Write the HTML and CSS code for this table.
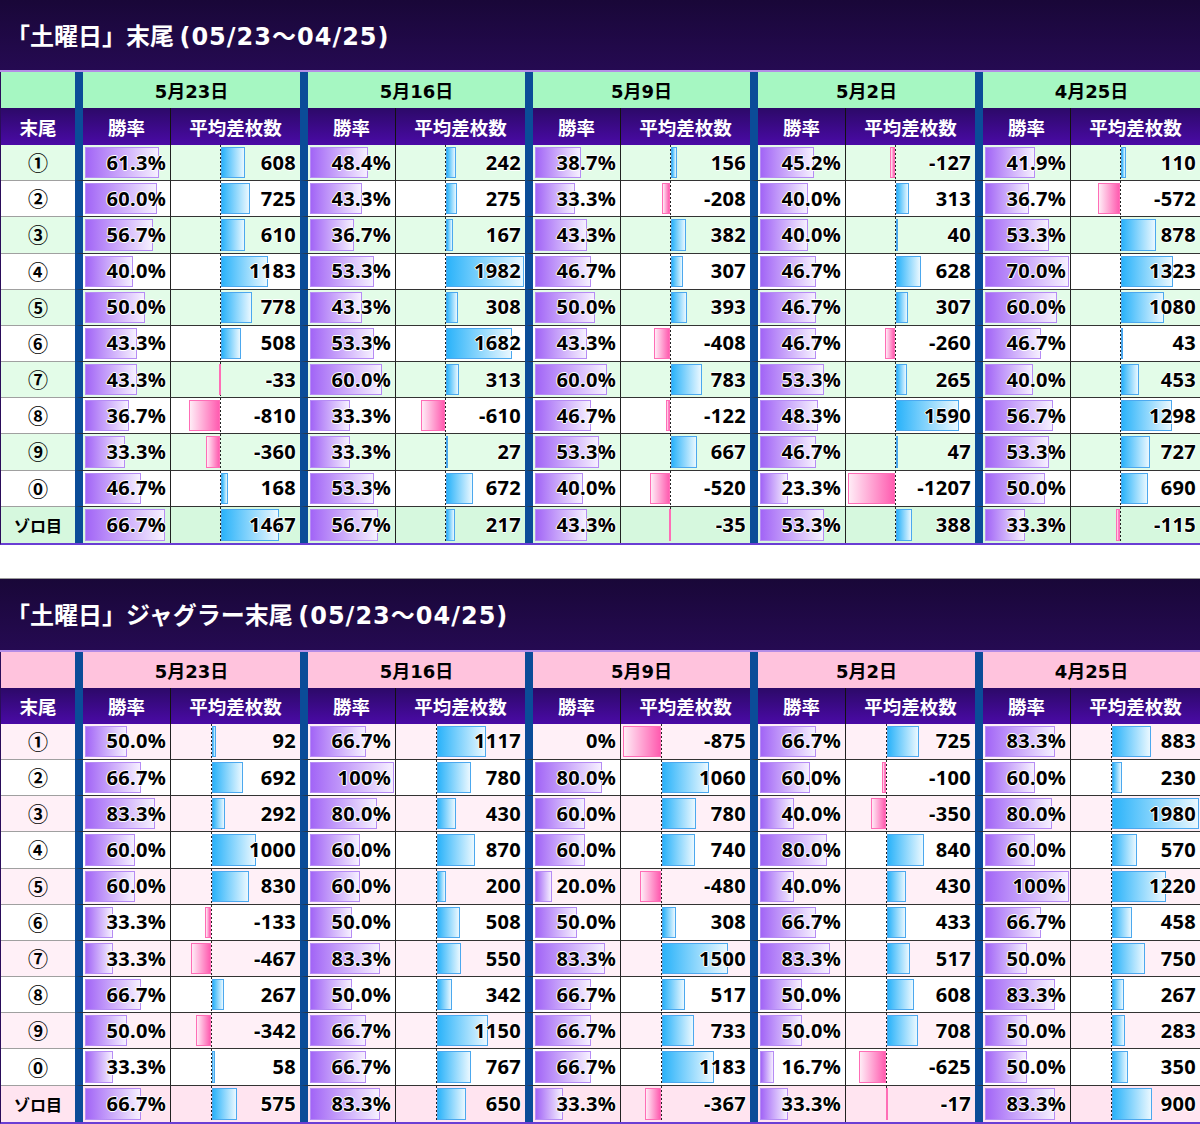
FILE: index.html
```html
<!DOCTYPE html>
<html lang="ja">
<head>
<meta charset="utf-8">
<title>土曜日 末尾</title>
<link rel="stylesheet" href="styles.css">
</head>
<body>
<div class="sheet">

<section class="block t1">
<div class="title"><span class="tj">「土曜日」末尾 </span><span class="rng">(05/23～04/25)</span></div>
<div class="table">
<div class="row h1">
<div class="c k"></div>
<div class="c date">5月23日</div>
<div class="c date">5月16日</div>
<div class="c date">5月9日</div>
<div class="c date">5月2日</div>
<div class="c date">4月25日</div>
</div>
<div class="row h2">
<div class="c k">末尾</div>
<div class="c wr">勝率</div><div class="c df">平均差枚数</div>
<div class="c wr">勝率</div><div class="c df">平均差枚数</div>
<div class="c wr">勝率</div><div class="c df">平均差枚数</div>
<div class="c wr">勝率</div><div class="c df">平均差枚数</div>
<div class="c wr">勝率</div><div class="c df">平均差枚数</div>
</div>

<div class="row d odd">
<div class="c k">①</div>
<div class="c wr"><i class="wb" style="--p:61.3"></i><span class="n">61.3%</span></div>
<div class="c df"><i class="db pos" style="--v:608"></i><span class="n">608</span></div>
<div class="c wr"><i class="wb" style="--p:48.4"></i><span class="n">48.4%</span></div>
<div class="c df"><i class="db pos" style="--v:242"></i><span class="n">242</span></div>
<div class="c wr"><i class="wb" style="--p:38.7"></i><span class="n">38.7%</span></div>
<div class="c df"><i class="db pos" style="--v:156"></i><span class="n">156</span></div>
<div class="c wr"><i class="wb" style="--p:45.2"></i><span class="n">45.2%</span></div>
<div class="c df"><i class="db neg" style="--v:127"></i><span class="n">-127</span></div>
<div class="c wr"><i class="wb" style="--p:41.9"></i><span class="n">41.9%</span></div>
<div class="c df"><i class="db pos" style="--v:110"></i><span class="n">110</span></div>
</div>

<div class="row d">
<div class="c k">②</div>
<div class="c wr"><i class="wb" style="--p:60"></i><span class="n">60.0%</span></div>
<div class="c df"><i class="db pos" style="--v:725"></i><span class="n">725</span></div>
<div class="c wr"><i class="wb" style="--p:43.3"></i><span class="n">43.3%</span></div>
<div class="c df"><i class="db pos" style="--v:275"></i><span class="n">275</span></div>
<div class="c wr"><i class="wb" style="--p:33.3"></i><span class="n">33.3%</span></div>
<div class="c df"><i class="db neg" style="--v:208"></i><span class="n">-208</span></div>
<div class="c wr"><i class="wb" style="--p:40"></i><span class="n">40.0%</span></div>
<div class="c df"><i class="db pos" style="--v:313"></i><span class="n">313</span></div>
<div class="c wr"><i class="wb" style="--p:36.7"></i><span class="n">36.7%</span></div>
<div class="c df"><i class="db neg" style="--v:572"></i><span class="n">-572</span></div>
</div>

<div class="row d odd">
<div class="c k">③</div>
<div class="c wr"><i class="wb" style="--p:56.7"></i><span class="n">56.7%</span></div>
<div class="c df"><i class="db pos" style="--v:610"></i><span class="n">610</span></div>
<div class="c wr"><i class="wb" style="--p:36.7"></i><span class="n">36.7%</span></div>
<div class="c df"><i class="db pos" style="--v:167"></i><span class="n">167</span></div>
<div class="c wr"><i class="wb" style="--p:43.3"></i><span class="n">43.3%</span></div>
<div class="c df"><i class="db pos" style="--v:382"></i><span class="n">382</span></div>
<div class="c wr"><i class="wb" style="--p:40"></i><span class="n">40.0%</span></div>
<div class="c df"><i class="db pos" style="--v:40"></i><span class="n">40</span></div>
<div class="c wr"><i class="wb" style="--p:53.3"></i><span class="n">53.3%</span></div>
<div class="c df"><i class="db pos" style="--v:878"></i><span class="n">878</span></div>
</div>

<div class="row d">
<div class="c k">④</div>
<div class="c wr"><i class="wb" style="--p:40"></i><span class="n">40.0%</span></div>
<div class="c df"><i class="db pos" style="--v:1183"></i><span class="n">1183</span></div>
<div class="c wr"><i class="wb" style="--p:53.3"></i><span class="n">53.3%</span></div>
<div class="c df"><i class="db pos" style="--v:1982"></i><span class="n">1982</span></div>
<div class="c wr"><i class="wb" style="--p:46.7"></i><span class="n">46.7%</span></div>
<div class="c df"><i class="db pos" style="--v:307"></i><span class="n">307</span></div>
<div class="c wr"><i class="wb" style="--p:46.7"></i><span class="n">46.7%</span></div>
<div class="c df"><i class="db pos" style="--v:628"></i><span class="n">628</span></div>
<div class="c wr"><i class="wb" style="--p:70"></i><span class="n">70.0%</span></div>
<div class="c df"><i class="db pos" style="--v:1323"></i><span class="n">1323</span></div>
</div>

<div class="row d odd">
<div class="c k">⑤</div>
<div class="c wr"><i class="wb" style="--p:50"></i><span class="n">50.0%</span></div>
<div class="c df"><i class="db pos" style="--v:778"></i><span class="n">778</span></div>
<div class="c wr"><i class="wb" style="--p:43.3"></i><span class="n">43.3%</span></div>
<div class="c df"><i class="db pos" style="--v:308"></i><span class="n">308</span></div>
<div class="c wr"><i class="wb" style="--p:50"></i><span class="n">50.0%</span></div>
<div class="c df"><i class="db pos" style="--v:393"></i><span class="n">393</span></div>
<div class="c wr"><i class="wb" style="--p:46.7"></i><span class="n">46.7%</span></div>
<div class="c df"><i class="db pos" style="--v:307"></i><span class="n">307</span></div>
<div class="c wr"><i class="wb" style="--p:60"></i><span class="n">60.0%</span></div>
<div class="c df"><i class="db pos" style="--v:1080"></i><span class="n">1080</span></div>
</div>

<div class="row d">
<div class="c k">⑥</div>
<div class="c wr"><i class="wb" style="--p:43.3"></i><span class="n">43.3%</span></div>
<div class="c df"><i class="db pos" style="--v:508"></i><span class="n">508</span></div>
<div class="c wr"><i class="wb" style="--p:53.3"></i><span class="n">53.3%</span></div>
<div class="c df"><i class="db pos" style="--v:1682"></i><span class="n">1682</span></div>
<div class="c wr"><i class="wb" style="--p:43.3"></i><span class="n">43.3%</span></div>
<div class="c df"><i class="db neg" style="--v:408"></i><span class="n">-408</span></div>
<div class="c wr"><i class="wb" style="--p:46.7"></i><span class="n">46.7%</span></div>
<div class="c df"><i class="db neg" style="--v:260"></i><span class="n">-260</span></div>
<div class="c wr"><i class="wb" style="--p:46.7"></i><span class="n">46.7%</span></div>
<div class="c df"><i class="db pos" style="--v:43"></i><span class="n">43</span></div>
</div>

<div class="row d odd">
<div class="c k">⑦</div>
<div class="c wr"><i class="wb" style="--p:43.3"></i><span class="n">43.3%</span></div>
<div class="c df"><i class="db neg" style="--v:33"></i><span class="n">-33</span></div>
<div class="c wr"><i class="wb" style="--p:60"></i><span class="n">60.0%</span></div>
<div class="c df"><i class="db pos" style="--v:313"></i><span class="n">313</span></div>
<div class="c wr"><i class="wb" style="--p:60"></i><span class="n">60.0%</span></div>
<div class="c df"><i class="db pos" style="--v:783"></i><span class="n">783</span></div>
<div class="c wr"><i class="wb" style="--p:53.3"></i><span class="n">53.3%</span></div>
<div class="c df"><i class="db pos" style="--v:265"></i><span class="n">265</span></div>
<div class="c wr"><i class="wb" style="--p:40"></i><span class="n">40.0%</span></div>
<div class="c df"><i class="db pos" style="--v:453"></i><span class="n">453</span></div>
</div>

<div class="row d">
<div class="c k">⑧</div>
<div class="c wr"><i class="wb" style="--p:36.7"></i><span class="n">36.7%</span></div>
<div class="c df"><i class="db neg" style="--v:810"></i><span class="n">-810</span></div>
<div class="c wr"><i class="wb" style="--p:33.3"></i><span class="n">33.3%</span></div>
<div class="c df"><i class="db neg" style="--v:610"></i><span class="n">-610</span></div>
<div class="c wr"><i class="wb" style="--p:46.7"></i><span class="n">46.7%</span></div>
<div class="c df"><i class="db neg" style="--v:122"></i><span class="n">-122</span></div>
<div class="c wr"><i class="wb" style="--p:48.3"></i><span class="n">48.3%</span></div>
<div class="c df"><i class="db pos" style="--v:1590"></i><span class="n">1590</span></div>
<div class="c wr"><i class="wb" style="--p:56.7"></i><span class="n">56.7%</span></div>
<div class="c df"><i class="db pos" style="--v:1298"></i><span class="n">1298</span></div>
</div>

<div class="row d odd">
<div class="c k">⑨</div>
<div class="c wr"><i class="wb" style="--p:33.3"></i><span class="n">33.3%</span></div>
<div class="c df"><i class="db neg" style="--v:360"></i><span class="n">-360</span></div>
<div class="c wr"><i class="wb" style="--p:33.3"></i><span class="n">33.3%</span></div>
<div class="c df"><i class="db pos" style="--v:27"></i><span class="n">27</span></div>
<div class="c wr"><i class="wb" style="--p:53.3"></i><span class="n">53.3%</span></div>
<div class="c df"><i class="db pos" style="--v:667"></i><span class="n">667</span></div>
<div class="c wr"><i class="wb" style="--p:46.7"></i><span class="n">46.7%</span></div>
<div class="c df"><i class="db pos" style="--v:47"></i><span class="n">47</span></div>
<div class="c wr"><i class="wb" style="--p:53.3"></i><span class="n">53.3%</span></div>
<div class="c df"><i class="db pos" style="--v:727"></i><span class="n">727</span></div>
</div>

<div class="row d">
<div class="c k">⓪</div>
<div class="c wr"><i class="wb" style="--p:46.7"></i><span class="n">46.7%</span></div>
<div class="c df"><i class="db pos" style="--v:168"></i><span class="n">168</span></div>
<div class="c wr"><i class="wb" style="--p:53.3"></i><span class="n">53.3%</span></div>
<div class="c df"><i class="db pos" style="--v:672"></i><span class="n">672</span></div>
<div class="c wr"><i class="wb" style="--p:40"></i><span class="n">40.0%</span></div>
<div class="c df"><i class="db neg" style="--v:520"></i><span class="n">-520</span></div>
<div class="c wr"><i class="wb" style="--p:23.3"></i><span class="n">23.3%</span></div>
<div class="c df"><i class="db neg" style="--v:1207"></i><span class="n">-1207</span></div>
<div class="c wr"><i class="wb" style="--p:50"></i><span class="n">50.0%</span></div>
<div class="c df"><i class="db pos" style="--v:690"></i><span class="n">690</span></div>
</div>

<div class="row d zoro">
<div class="c k small">ゾロ目</div>
<div class="c wr"><i class="wb" style="--p:66.7"></i><span class="n">66.7%</span></div>
<div class="c df"><i class="db pos" style="--v:1467"></i><span class="n">1467</span></div>
<div class="c wr"><i class="wb" style="--p:56.7"></i><span class="n">56.7%</span></div>
<div class="c df"><i class="db pos" style="--v:217"></i><span class="n">217</span></div>
<div class="c wr"><i class="wb" style="--p:43.3"></i><span class="n">43.3%</span></div>
<div class="c df"><i class="db neg" style="--v:35"></i><span class="n">-35</span></div>
<div class="c wr"><i class="wb" style="--p:53.3"></i><span class="n">53.3%</span></div>
<div class="c df"><i class="db pos" style="--v:388"></i><span class="n">388</span></div>
<div class="c wr"><i class="wb" style="--p:33.3"></i><span class="n">33.3%</span></div>
<div class="c df"><i class="db neg" style="--v:115"></i><span class="n">-115</span></div>
</div>
</div>
</section>

<section class="block t2">
<div class="title"><span class="tj">「土曜日」ジャグラー末尾 </span><span class="rng">(05/23～04/25)</span></div>
<div class="table">
<div class="row h1">
<div class="c k"></div>
<div class="c date">5月23日</div>
<div class="c date">5月16日</div>
<div class="c date">5月9日</div>
<div class="c date">5月2日</div>
<div class="c date">4月25日</div>
</div>
<div class="row h2">
<div class="c k">末尾</div>
<div class="c wr">勝率</div><div class="c df">平均差枚数</div>
<div class="c wr">勝率</div><div class="c df">平均差枚数</div>
<div class="c wr">勝率</div><div class="c df">平均差枚数</div>
<div class="c wr">勝率</div><div class="c df">平均差枚数</div>
<div class="c wr">勝率</div><div class="c df">平均差枚数</div>
</div>

<div class="row d odd">
<div class="c k">①</div>
<div class="c wr"><i class="wb" style="--p:50"></i><span class="n">50.0%</span></div>
<div class="c df"><i class="db pos" style="--v:92"></i><span class="n">92</span></div>
<div class="c wr"><i class="wb" style="--p:66.7"></i><span class="n">66.7%</span></div>
<div class="c df"><i class="db pos" style="--v:1117"></i><span class="n">1117</span></div>
<div class="c wr"><span class="n">0%</span></div>
<div class="c df"><i class="db neg" style="--v:875"></i><span class="n">-875</span></div>
<div class="c wr"><i class="wb" style="--p:66.7"></i><span class="n">66.7%</span></div>
<div class="c df"><i class="db pos" style="--v:725"></i><span class="n">725</span></div>
<div class="c wr"><i class="wb" style="--p:83.3"></i><span class="n">83.3%</span></div>
<div class="c df"><i class="db pos" style="--v:883"></i><span class="n">883</span></div>
</div>

<div class="row d">
<div class="c k">②</div>
<div class="c wr"><i class="wb" style="--p:66.7"></i><span class="n">66.7%</span></div>
<div class="c df"><i class="db pos" style="--v:692"></i><span class="n">692</span></div>
<div class="c wr"><i class="wb" style="--p:100"></i><span class="n">100%</span></div>
<div class="c df"><i class="db pos" style="--v:780"></i><span class="n">780</span></div>
<div class="c wr"><i class="wb" style="--p:80"></i><span class="n">80.0%</span></div>
<div class="c df"><i class="db pos" style="--v:1060"></i><span class="n">1060</span></div>
<div class="c wr"><i class="wb" style="--p:60"></i><span class="n">60.0%</span></div>
<div class="c df"><i class="db neg" style="--v:100"></i><span class="n">-100</span></div>
<div class="c wr"><i class="wb" style="--p:60"></i><span class="n">60.0%</span></div>
<div class="c df"><i class="db pos" style="--v:230"></i><span class="n">230</span></div>
</div>

<div class="row d odd">
<div class="c k">③</div>
<div class="c wr"><i class="wb" style="--p:83.3"></i><span class="n">83.3%</span></div>
<div class="c df"><i class="db pos" style="--v:292"></i><span class="n">292</span></div>
<div class="c wr"><i class="wb" style="--p:80"></i><span class="n">80.0%</span></div>
<div class="c df"><i class="db pos" style="--v:430"></i><span class="n">430</span></div>
<div class="c wr"><i class="wb" style="--p:60"></i><span class="n">60.0%</span></div>
<div class="c df"><i class="db pos" style="--v:780"></i><span class="n">780</span></div>
<div class="c wr"><i class="wb" style="--p:40"></i><span class="n">40.0%</span></div>
<div class="c df"><i class="db neg" style="--v:350"></i><span class="n">-350</span></div>
<div class="c wr"><i class="wb" style="--p:80"></i><span class="n">80.0%</span></div>
<div class="c df"><i class="db pos" style="--v:1980"></i><span class="n">1980</span></div>
</div>

<div class="row d">
<div class="c k">④</div>
<div class="c wr"><i class="wb" style="--p:60"></i><span class="n">60.0%</span></div>
<div class="c df"><i class="db pos" style="--v:1000"></i><span class="n">1000</span></div>
<div class="c wr"><i class="wb" style="--p:60"></i><span class="n">60.0%</span></div>
<div class="c df"><i class="db pos" style="--v:870"></i><span class="n">870</span></div>
<div class="c wr"><i class="wb" style="--p:60"></i><span class="n">60.0%</span></div>
<div class="c df"><i class="db pos" style="--v:740"></i><span class="n">740</span></div>
<div class="c wr"><i class="wb" style="--p:80"></i><span class="n">80.0%</span></div>
<div class="c df"><i class="db pos" style="--v:840"></i><span class="n">840</span></div>
<div class="c wr"><i class="wb" style="--p:60"></i><span class="n">60.0%</span></div>
<div class="c df"><i class="db pos" style="--v:570"></i><span class="n">570</span></div>
</div>

<div class="row d odd">
<div class="c k">⑤</div>
<div class="c wr"><i class="wb" style="--p:60"></i><span class="n">60.0%</span></div>
<div class="c df"><i class="db pos" style="--v:830"></i><span class="n">830</span></div>
<div class="c wr"><i class="wb" style="--p:60"></i><span class="n">60.0%</span></div>
<div class="c df"><i class="db pos" style="--v:200"></i><span class="n">200</span></div>
<div class="c wr"><i class="wb" style="--p:20"></i><span class="n">20.0%</span></div>
<div class="c df"><i class="db neg" style="--v:480"></i><span class="n">-480</span></div>
<div class="c wr"><i class="wb" style="--p:40"></i><span class="n">40.0%</span></div>
<div class="c df"><i class="db pos" style="--v:430"></i><span class="n">430</span></div>
<div class="c wr"><i class="wb" style="--p:100"></i><span class="n">100%</span></div>
<div class="c df"><i class="db pos" style="--v:1220"></i><span class="n">1220</span></div>
</div>

<div class="row d">
<div class="c k">⑥</div>
<div class="c wr"><i class="wb" style="--p:33.3"></i><span class="n">33.3%</span></div>
<div class="c df"><i class="db neg" style="--v:133"></i><span class="n">-133</span></div>
<div class="c wr"><i class="wb" style="--p:50"></i><span class="n">50.0%</span></div>
<div class="c df"><i class="db pos" style="--v:508"></i><span class="n">508</span></div>
<div class="c wr"><i class="wb" style="--p:50"></i><span class="n">50.0%</span></div>
<div class="c df"><i class="db pos" style="--v:308"></i><span class="n">308</span></div>
<div class="c wr"><i class="wb" style="--p:66.7"></i><span class="n">66.7%</span></div>
<div class="c df"><i class="db pos" style="--v:433"></i><span class="n">433</span></div>
<div class="c wr"><i class="wb" style="--p:66.7"></i><span class="n">66.7%</span></div>
<div class="c df"><i class="db pos" style="--v:458"></i><span class="n">458</span></div>
</div>

<div class="row d odd">
<div class="c k">⑦</div>
<div class="c wr"><i class="wb" style="--p:33.3"></i><span class="n">33.3%</span></div>
<div class="c df"><i class="db neg" style="--v:467"></i><span class="n">-467</span></div>
<div class="c wr"><i class="wb" style="--p:83.3"></i><span class="n">83.3%</span></div>
<div class="c df"><i class="db pos" style="--v:550"></i><span class="n">550</span></div>
<div class="c wr"><i class="wb" style="--p:83.3"></i><span class="n">83.3%</span></div>
<div class="c df"><i class="db pos" style="--v:1500"></i><span class="n">1500</span></div>
<div class="c wr"><i class="wb" style="--p:83.3"></i><span class="n">83.3%</span></div>
<div class="c df"><i class="db pos" style="--v:517"></i><span class="n">517</span></div>
<div class="c wr"><i class="wb" style="--p:50"></i><span class="n">50.0%</span></div>
<div class="c df"><i class="db pos" style="--v:750"></i><span class="n">750</span></div>
</div>

<div class="row d">
<div class="c k">⑧</div>
<div class="c wr"><i class="wb" style="--p:66.7"></i><span class="n">66.7%</span></div>
<div class="c df"><i class="db pos" style="--v:267"></i><span class="n">267</span></div>
<div class="c wr"><i class="wb" style="--p:50"></i><span class="n">50.0%</span></div>
<div class="c df"><i class="db pos" style="--v:342"></i><span class="n">342</span></div>
<div class="c wr"><i class="wb" style="--p:66.7"></i><span class="n">66.7%</span></div>
<div class="c df"><i class="db pos" style="--v:517"></i><span class="n">517</span></div>
<div class="c wr"><i class="wb" style="--p:50"></i><span class="n">50.0%</span></div>
<div class="c df"><i class="db pos" style="--v:608"></i><span class="n">608</span></div>
<div class="c wr"><i class="wb" style="--p:83.3"></i><span class="n">83.3%</span></div>
<div class="c df"><i class="db pos" style="--v:267"></i><span class="n">267</span></div>
</div>

<div class="row d odd">
<div class="c k">⑨</div>
<div class="c wr"><i class="wb" style="--p:50"></i><span class="n">50.0%</span></div>
<div class="c df"><i class="db neg" style="--v:342"></i><span class="n">-342</span></div>
<div class="c wr"><i class="wb" style="--p:66.7"></i><span class="n">66.7%</span></div>
<div class="c df"><i class="db pos" style="--v:1150"></i><span class="n">1150</span></div>
<div class="c wr"><i class="wb" style="--p:66.7"></i><span class="n">66.7%</span></div>
<div class="c df"><i class="db pos" style="--v:733"></i><span class="n">733</span></div>
<div class="c wr"><i class="wb" style="--p:50"></i><span class="n">50.0%</span></div>
<div class="c df"><i class="db pos" style="--v:708"></i><span class="n">708</span></div>
<div class="c wr"><i class="wb" style="--p:50"></i><span class="n">50.0%</span></div>
<div class="c df"><i class="db pos" style="--v:283"></i><span class="n">283</span></div>
</div>

<div class="row d">
<div class="c k">⓪</div>
<div class="c wr"><i class="wb" style="--p:33.3"></i><span class="n">33.3%</span></div>
<div class="c df"><i class="db pos" style="--v:58"></i><span class="n">58</span></div>
<div class="c wr"><i class="wb" style="--p:66.7"></i><span class="n">66.7%</span></div>
<div class="c df"><i class="db pos" style="--v:767"></i><span class="n">767</span></div>
<div class="c wr"><i class="wb" style="--p:66.7"></i><span class="n">66.7%</span></div>
<div class="c df"><i class="db pos" style="--v:1183"></i><span class="n">1183</span></div>
<div class="c wr"><i class="wb" style="--p:16.7"></i><span class="n">16.7%</span></div>
<div class="c df"><i class="db neg" style="--v:625"></i><span class="n">-625</span></div>
<div class="c wr"><i class="wb" style="--p:50"></i><span class="n">50.0%</span></div>
<div class="c df"><i class="db pos" style="--v:350"></i><span class="n">350</span></div>
</div>

<div class="row d zoro">
<div class="c k small">ゾロ目</div>
<div class="c wr"><i class="wb" style="--p:66.7"></i><span class="n">66.7%</span></div>
<div class="c df"><i class="db pos" style="--v:575"></i><span class="n">575</span></div>
<div class="c wr"><i class="wb" style="--p:83.3"></i><span class="n">83.3%</span></div>
<div class="c df"><i class="db pos" style="--v:650"></i><span class="n">650</span></div>
<div class="c wr"><i class="wb" style="--p:33.3"></i><span class="n">33.3%</span></div>
<div class="c df"><i class="db neg" style="--v:367"></i><span class="n">-367</span></div>
<div class="c wr"><i class="wb" style="--p:33.3"></i><span class="n">33.3%</span></div>
<div class="c df"><i class="db neg" style="--v:17"></i><span class="n">-17</span></div>
<div class="c wr"><i class="wb" style="--p:83.3"></i><span class="n">83.3%</span></div>
<div class="c df"><i class="db pos" style="--v:900"></i><span class="n">900</span></div>
</div>
</div>
</section>

</div>
</body>
</html>
```

FILE: styles.css
```css
html, body {
  margin: 0;
  padding: 0;
  background: #fff;
}

body {
  font-family: "Noto Sans", "Noto Sans CJK JP", sans-serif;
  color: #000;
}

.sheet {
  width: 1200px;
}

.t1 {
  --pmax: 70;
  --dmax: 1982;
  --dmin: 1207;
  --axis: 49.3px;
  --posw: 77.7px;
  --negw: 47.3px;
  --odd: #e3fce8;
  --zoro: #d6f8de;
  --h1: #a6f7c2;
}

.t2 {
  --pmax: 100;
  --dmax: 1980;
  --dmin: 875;
  --axis: 40.3px;
  --posw: 86.7px;
  --negw: 38.3px;
  --odd: #fff0f7;
  --zoro: #ffe4f0;
  --h1: #ffc3dd;
  margin-top: 33px;
}

.title {
  box-sizing: border-box;
  height: 72px;
  padding: 0 0 2px 6px;
  display: flex;
  align-items: center;
  background: linear-gradient(#190738, #250a52);
  border-bottom: 2px solid #b48de6;
  color: #fff;
  font-weight: 700;
  white-space: pre;
}

.t2 .title {
  height: 74px;
  border-top: 1px solid #9a9a9a;
}

.tj {
  font-family: "Noto Sans CJK JP", sans-serif;
  font-size: 24px;
}

.rng {
  font-family: "DejaVu Sans", "Noto Sans CJK JP", sans-serif;
  font-size: 24px;
  letter-spacing: 1px;
}

.table {
  border-left: 1px solid #2a0c5a;
  border-bottom: 2px solid #6a3dd4;
}

.row {
  display: grid;
  grid-template-columns: 74px repeat(5, 96px 129px);
}

.row.h1 {
  height: 36px;
  background: var(--h1);
}

.row.h2 {
  height: 37px;
  background: linear-gradient(#2c0968, #4a0aa6);
  color: #fff;
}

.t2 .row.h2 {
  height: 36px;
}

.row.d {
  height: 36.18px;
  background: #fff;
}

.row.d.odd {
  background: var(--odd);
}

.row.d.zoro {
  background: var(--zoro);
}

.c {
  position: relative;
  box-sizing: border-box;
  display: flex;
  align-items: center;
  justify-content: flex-end;
  padding-right: 4px;
  border-bottom: 1px solid #333;
  min-width: 0;
}

.row.d:last-child .c {
  border-bottom: 0;
}

.c.k {
  justify-content: center;
  padding: 0;
  border-bottom-color: #a0a0a0;
  font-size: 20px;
  font-weight: 700;
  font-family: "Noto Sans CJK JP", "DejaVu Sans", sans-serif;
}

.c.k.small {
  font-size: 16px;
}

.c.wr {
  border-left: 8px solid #0b4c98;
  border-right: 1px solid #222;
}

.c.date {
  grid-column: span 2;
  justify-content: center;
  padding: 0;
  border-left: 8px solid #0b4c98;
  border-bottom: 0;
  font-family: "DejaVu Sans", "Noto Sans CJK JP", sans-serif;
  font-size: 18px;
  font-weight: 700;
}

.h1 .c.k {
  border-bottom: 0;
}

.h2 .c {
  justify-content: center;
  padding: 0;
  border-bottom: 0;
  font-size: 18.5px;
  font-weight: 700;
  font-family: "Noto Sans CJK JP", sans-serif;
}

.h2 .c.wr {
  border-right-color: #111;
}

.n {
  position: relative;
  font-size: 20px;
  font-weight: 700;
  line-height: 1;
  letter-spacing: 0.3px;
  text-shadow: -1px 0 #fff, 1px 0 #fff, 0 -1px #fff, 0 1px #fff;
}

.wb {
  position: absolute;
  left: 2px;
  top: 2px;
  bottom: 2px;
  box-sizing: border-box;
  width: calc(var(--p) / var(--pmax) * 84px);
  background: linear-gradient(90deg, #a265f6, #f6f0ff);
  border: 1px solid #b68cf4;
}

.d .df::before {
  content: "";
  position: absolute;
  left: var(--axis);
  top: 0;
  bottom: 0;
  width: 1px;
  background: repeating-linear-gradient(#222 0 2px, transparent 2px 4px);
}

.db {
  position: absolute;
  top: 2px;
  bottom: 2px;
  box-sizing: border-box;
}

.db.pos {
  left: calc(var(--axis) + 1px);
  width: calc(var(--v) / var(--dmax) * var(--posw));
  background: linear-gradient(90deg, #2bb3fa, #eaf8ff);
  border: 1px solid #4ca8ee;
}

.db.neg {
  --w: calc(var(--v) / var(--dmin) * var(--negw));
  width: var(--w);
  left: calc(var(--axis) - var(--w));
  background: linear-gradient(90deg, #ffecf6, #ff5cb0);
  border: 1px solid #ff6db6;
}
```
